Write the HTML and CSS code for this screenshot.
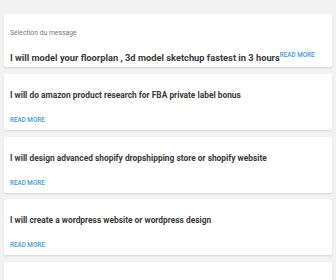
FILE: index.html
```html
<!DOCTYPE html>
<html lang="en">
<head>
    <meta charset="UTF-8">
    <meta name="viewport" content="width=device-width, initial-scale=1.0">
    <title>Gigs</title>
    <link rel="stylesheet" href="styles.css">
</head>
<body>

<div class="list">
    <!-- Selected message -->
    <div class="card first">
        <div class="label">Sélection du message</div>
        <h2 class="title">I will model your floorplan , 3d model sketchup fastest in 3 hours<a class="more inline" href="#">Read more</a></h2>
    </div>

    <div class="card">
        <h2 class="title">I will do amazon product research for FBA private label bonus</h2>
        <a class="more" href="#">Read more</a>
    </div>

    <div class="card">
        <h2 class="title">I will design advanced shopify dropshipping store or shopify website</h2>
        <a class="more" href="#">Read more</a>
    </div>

    <div class="card">
        <h2 class="title">I will create a wordpress website or wordpress design</h2>
        <a class="more" href="#">Read more</a>
    </div>

    <!-- next card, cut by the bottom edge -->
    <div class="card"></div>
</div>

</body>
</html>
```

FILE: styles.css
```css
body {
    font-family: Roboto, "Liberation Sans", sans-serif;
    margin: 0;
    background-color: #f2f2f2;
}
.list {
    display: flex;
    flex-direction: column;
    gap: 6.5px;
    padding: 14px 4px 0;
}
.card {
    background-color: #fff;
    border-radius: 2px;
    box-shadow: 0 1px 2px rgba(0, 0, 0, 0.12);
    padding: 15px 6px 7px;
    height: 56px;
    box-sizing: border-box;
    flex-shrink: 0;
}
.card.first {
    height: 53px;
    padding-top: 14px;
    margin-bottom: 0.5px;
}
.label {
    font-size: 6.8px;
    line-height: 10px;
    color: #777;
    margin-bottom: 13px;
}
.title {
    font-size: 8.4px;
    font-weight: 700;
    line-height: 12px;
    color: #3a3a3a;
    margin: 0 0 15px;
}
.first .title {
    font-size: 9.3px;
    margin: 0;
}
.more {
    display: block;
    font-size: 6.3px;
    font-weight: 500;
    line-height: 8px;
    text-transform: uppercase;
    color: #3d9ad6;
    text-decoration: none;
}
.more.inline {
    display: inline;
    vertical-align: 4px;
}
```
